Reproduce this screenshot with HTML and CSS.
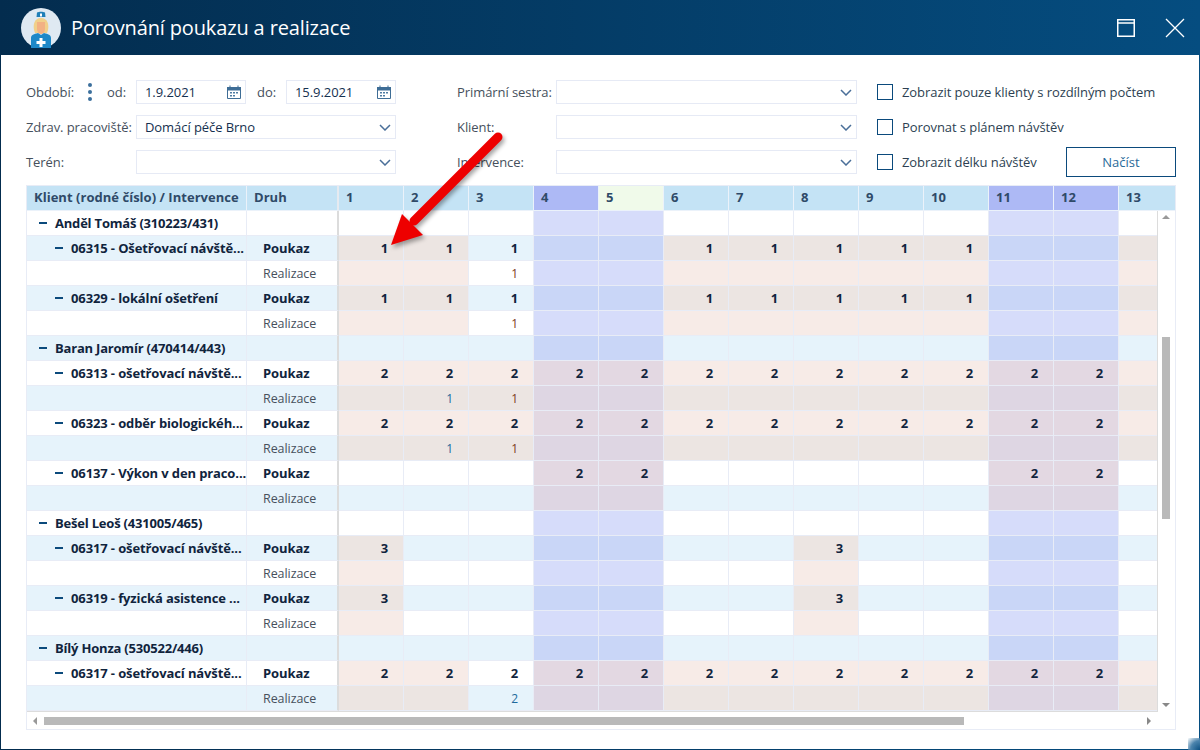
FILE: index.html
```html
<!DOCTYPE html>
<html lang="cs">
<head>
<meta charset="utf-8">
<title>Porovnání poukazu a realizace</title>
<link rel="stylesheet" href="styles.css">
</head>
<body>
<svg width="0" height="0" class="defs">
  <defs>
    <symbol id="chev" viewBox="0 0 12 7"><path d="M1 1l5 5 5-5" fill="none" stroke="#4a6f99" stroke-width="1.5"/></symbol>
    <symbol id="cal" viewBox="0 0 14 14"><path d="M.5 2.5h13v11H.5z" fill="#fff" stroke="#3e6d96"/><path d="M0 2h14v3.5H0z" fill="#3e6d96"/><path d="M3 .5v2M11 .5v2" stroke="#3e6d96"/><path d="M3 7h2v1.500H3zM6 7h2v1.500H6zM9 7h2v1.500H9zM3 10h2v1.500H3zM6 10h2v1.500H6z" fill="#4f7ca3"/></symbol>
  </defs>
</svg>
<div class="window">
  <header class="titlebar">
    <svg class="avatar" viewBox="0 0 40 40" width="40" height="40">
      <circle cx="20" cy="20" r="20" fill="#dfe9f2"/>
      <path d="M13 22c-1-5 0-12 7-12s8 7 7 12l-1 3H14z" fill="#f1d08a"/>
      <path d="M16 14h8v7c0 3-2 5-4 5s-4-2-4-5z" fill="#f2b184"/>
      <path d="M16 4.500c2-1 6-1 8 0l.5 4.500h-9z" fill="#1f7fb8"/>
      <path d="M19 5.500h2v3h-2z" fill="#fff"/>
      <path d="M10 40V30c0-3 3-4 7-5l3 2 3-2c4 1 7 2 7 5v10a20 20 0 0 1-20 0z" fill="#1d88c8"/>
      <path d="M18.500 30h3v3h3v3h-3v3h-3v-3h-3v-3h3z" fill="#fff"/>
    </svg>
    <h1 class="title">Porovnání poukazu a realizace</h1>
    <svg class="win-btn maximize" viewBox="0 0 18 18" width="18" height="18"><path d="M.75.75h16.500v16.500H.75z" fill="none" stroke="#fff" stroke-width="1.500"/><path d="M0 4h18" stroke="#fff" stroke-width="1.500"/></svg>
    <svg class="win-btn close" viewBox="0 0 20 20" width="20" height="20"><path d="M1 1l18 18M19 1L1 19" fill="none" stroke="#fff" stroke-width="1.300"/></svg>
  </header>
  <main class="content">
    <section class="filters">
      <div class="fcol col-a">
        <div class="frow">
          <label class="lbl lbl-period">Období:</label>
          <span class="kebab"><i></i><i></i><i></i></span>
          <label class="lbl lbl-from">od:</label>
          <div class="field date">1.9.2021<svg class="cal" width="14" height="14"><use href="#cal"/></svg></div>
          <label class="lbl lbl-to">do:</label>
          <div class="field date">15.9.2021<svg class="cal" width="14" height="14"><use href="#cal"/></svg></div>
        </div>
        <div class="frow">
          <label class="lbl lbl-a">Zdrav. pracoviště:</label>
          <div class="field grow">Domácí péče Brno<svg class="chev" width="12" height="7"><use href="#chev"/></svg></div>
        </div>
        <div class="frow">
          <label class="lbl lbl-a">Terén:</label>
          <div class="field grow"><svg class="chev" width="12" height="7"><use href="#chev"/></svg></div>
        </div>
      </div>
      <div class="fcol col-b">
        <div class="frow"><label class="lbl lbl-b">Primární sestra:</label><div class="field grow"><svg class="chev" width="12" height="7"><use href="#chev"/></svg></div></div>
        <div class="frow"><label class="lbl lbl-b">Klient:</label><div class="field grow"><svg class="chev" width="12" height="7"><use href="#chev"/></svg></div></div>
        <div class="frow"><label class="lbl lbl-b">Intervence:</label><div class="field grow"><svg class="chev" width="12" height="7"><use href="#chev"/></svg></div></div>
      </div>
      <div class="fcol col-c">
        <div class="frow"><input type="checkbox" class="check"><span class="lbl">Zobrazit pouze klienty s rozdílným počtem</span></div>
        <div class="frow"><input type="checkbox" class="check"><span class="lbl">Porovnat s plánem návštěv</span></div>
        <div class="frow"><input type="checkbox" class="check"><span class="lbl">Zobrazit délku návštěv</span><button class="load">Načíst</button></div>
      </div>
    </section>

    <section class="grid">
      <div class="row head">
        <span>Klient (rodné číslo) / Intervence</span><span class="druh">Druh</span>
        <span>1</span><span>2</span><span>3</span><span class="we">4</span><span class="today">5</span><span>6</span><span>7</span><span>8</span><span>9</span><span>10</span><span class="we">11</span><span class="we">12</span><span>13</span>
      </div>
      <div class="body">
        <div class="rows">
          <div class="row"><span class="name l1"><i class="minus"></i>Anděl Tomáš (310223/431)</span><span class="kind"></span><span class="d"></span><span class="d"></span><span class="d"></span><span class="d e"></span><span class="d e"></span><span class="d"></span><span class="d"></span><span class="d"></span><span class="d"></span><span class="d"></span><span class="d e"></span><span class="d e"></span><span class="d"></span></div>
          <div class="row alt"><span class="name l2"><i class="minus"></i>06315 - Ošetřovací návště...</span><span class="kind strong">Poukaz</span><span class="d f b">1</span><span class="d f b">1</span><span class="d b">1</span><span class="d e"></span><span class="d e"></span><span class="d f b">1</span><span class="d f b">1</span><span class="d f b">1</span><span class="d f b">1</span><span class="d f b">1</span><span class="d e"></span><span class="d e"></span><span class="d f"></span></div>
          <div class="row"><span class="name"></span><span class="kind">Realizace</span><span class="d f"></span><span class="d f"></span><span class="d rz">1</span><span class="d e"></span><span class="d e"></span><span class="d f"></span><span class="d f"></span><span class="d f"></span><span class="d f"></span><span class="d f"></span><span class="d e"></span><span class="d e"></span><span class="d f"></span></div>
          <div class="row alt"><span class="name l2"><i class="minus"></i>06329 - lokální ošetření</span><span class="kind strong">Poukaz</span><span class="d f b">1</span><span class="d f b">1</span><span class="d b">1</span><span class="d e"></span><span class="d e"></span><span class="d f b">1</span><span class="d f b">1</span><span class="d f b">1</span><span class="d f b">1</span><span class="d f b">1</span><span class="d e"></span><span class="d e"></span><span class="d f"></span></div>
          <div class="row"><span class="name"></span><span class="kind">Realizace</span><span class="d f"></span><span class="d f"></span><span class="d rz">1</span><span class="d e"></span><span class="d e"></span><span class="d f"></span><span class="d f"></span><span class="d f"></span><span class="d f"></span><span class="d f"></span><span class="d e"></span><span class="d e"></span><span class="d f"></span></div>

          <div class="row alt"><span class="name l1"><i class="minus"></i>Baran Jaromír (470414/443)</span><span class="kind"></span><span class="d"></span><span class="d"></span><span class="d"></span><span class="d e"></span><span class="d e"></span><span class="d"></span><span class="d"></span><span class="d"></span><span class="d"></span><span class="d"></span><span class="d e"></span><span class="d e"></span><span class="d"></span></div>
          <div class="row"><span class="name l2"><i class="minus"></i>06313 - ošetřovací návště...</span><span class="kind strong">Poukaz</span><span class="d f b">2</span><span class="d f b">2</span><span class="d f b">2</span><span class="d e f b">2</span><span class="d e f b">2</span><span class="d f b">2</span><span class="d f b">2</span><span class="d f b">2</span><span class="d f b">2</span><span class="d f b">2</span><span class="d e f b">2</span><span class="d e f b">2</span><span class="d f"></span></div>
          <div class="row alt"><span class="name"></span><span class="kind">Realizace</span><span class="d f"></span><span class="d f rz blue">1</span><span class="d f rz">1</span><span class="d e f"></span><span class="d e f"></span><span class="d f"></span><span class="d f"></span><span class="d f"></span><span class="d f"></span><span class="d f"></span><span class="d e f"></span><span class="d e f"></span><span class="d f"></span></div>
          <div class="row"><span class="name l2"><i class="minus"></i>06323 - odběr biologickéh...</span><span class="kind strong">Poukaz</span><span class="d f b">2</span><span class="d f b">2</span><span class="d f b">2</span><span class="d e f b">2</span><span class="d e f b">2</span><span class="d f b">2</span><span class="d f b">2</span><span class="d f b">2</span><span class="d f b">2</span><span class="d f b">2</span><span class="d e f b">2</span><span class="d e f b">2</span><span class="d f"></span></div>
          <div class="row alt"><span class="name"></span><span class="kind">Realizace</span><span class="d f"></span><span class="d f rz blue">1</span><span class="d f rz">1</span><span class="d e f"></span><span class="d e f"></span><span class="d f"></span><span class="d f"></span><span class="d f"></span><span class="d f"></span><span class="d f"></span><span class="d e f"></span><span class="d e f"></span><span class="d f"></span></div>
          <div class="row"><span class="name l2"><i class="minus"></i>06137 - Výkon v den praco...</span><span class="kind strong">Poukaz</span><span class="d"></span><span class="d"></span><span class="d"></span><span class="d e f b">2</span><span class="d e f b">2</span><span class="d"></span><span class="d"></span><span class="d"></span><span class="d"></span><span class="d"></span><span class="d e f b">2</span><span class="d e f b">2</span><span class="d"></span></div>
          <div class="row alt"><span class="name"></span><span class="kind">Realizace</span><span class="d"></span><span class="d"></span><span class="d"></span><span class="d e f"></span><span class="d e f"></span><span class="d"></span><span class="d"></span><span class="d"></span><span class="d"></span><span class="d"></span><span class="d e f"></span><span class="d e f"></span><span class="d"></span></div>

          <div class="row"><span class="name l1"><i class="minus"></i>Bešel Leoš (431005/465)</span><span class="kind"></span><span class="d"></span><span class="d"></span><span class="d"></span><span class="d e"></span><span class="d e"></span><span class="d"></span><span class="d"></span><span class="d"></span><span class="d"></span><span class="d"></span><span class="d e"></span><span class="d e"></span><span class="d"></span></div>
          <div class="row alt"><span class="name l2"><i class="minus"></i>06317 - ošetřovací návště...</span><span class="kind strong">Poukaz</span><span class="d f b">3</span><span class="d"></span><span class="d"></span><span class="d e"></span><span class="d e"></span><span class="d"></span><span class="d"></span><span class="d f b">3</span><span class="d"></span><span class="d"></span><span class="d e"></span><span class="d e"></span><span class="d"></span></div>
          <div class="row"><span class="name"></span><span class="kind">Realizace</span><span class="d f"></span><span class="d"></span><span class="d"></span><span class="d e"></span><span class="d e"></span><span class="d"></span><span class="d"></span><span class="d f"></span><span class="d"></span><span class="d"></span><span class="d e"></span><span class="d e"></span><span class="d"></span></div>
          <div class="row alt"><span class="name l2"><i class="minus"></i>06319 - fyzická asistence ...</span><span class="kind strong">Poukaz</span><span class="d f b">3</span><span class="d"></span><span class="d"></span><span class="d e"></span><span class="d e"></span><span class="d"></span><span class="d"></span><span class="d f b">3</span><span class="d"></span><span class="d"></span><span class="d e"></span><span class="d e"></span><span class="d"></span></div>
          <div class="row"><span class="name"></span><span class="kind">Realizace</span><span class="d f"></span><span class="d"></span><span class="d"></span><span class="d e"></span><span class="d e"></span><span class="d"></span><span class="d"></span><span class="d f"></span><span class="d"></span><span class="d"></span><span class="d e"></span><span class="d e"></span><span class="d"></span></div>

          <div class="row alt"><span class="name l1"><i class="minus"></i>Bílý Honza (530522/446)</span><span class="kind"></span><span class="d"></span><span class="d"></span><span class="d"></span><span class="d e"></span><span class="d e"></span><span class="d"></span><span class="d"></span><span class="d"></span><span class="d"></span><span class="d"></span><span class="d e"></span><span class="d e"></span><span class="d"></span></div>
          <div class="row"><span class="name l2"><i class="minus"></i>06317 - ošetřovací návště...</span><span class="kind strong">Poukaz</span><span class="d f b">2</span><span class="d f b">2</span><span class="d b">2</span><span class="d e f b">2</span><span class="d e f b">2</span><span class="d f b">2</span><span class="d f b">2</span><span class="d f b">2</span><span class="d f b">2</span><span class="d f b">2</span><span class="d e f b">2</span><span class="d e f b">2</span><span class="d f"></span></div>
          <div class="row alt"><span class="name"></span><span class="kind">Realizace</span><span class="d f"></span><span class="d f"></span><span class="d rz blue">2</span><span class="d e f"></span><span class="d e f"></span><span class="d f"></span><span class="d f"></span><span class="d f"></span><span class="d f"></span><span class="d f"></span><span class="d e f"></span><span class="d e f"></span><span class="d f"></span></div>
        </div>
        <div class="vscroll"><i class="arrow up"></i><i class="vthumb"></i><i class="arrow down"></i></div>
      </div>
      <div class="hscroll"><i class="arrow left"></i><i class="hthumb"></i><i class="arrow right"></i></div>
    </section>
  </main>
  <svg class="callout" width="130" height="130" viewBox="0 0 130 130">
    <g class="callout-shape">
      <path d="M112 7L28 91" fill="none" stroke="#ee0000" stroke-width="9" stroke-linecap="round"/>
      <path d="M5 115L16 84 37 105z" fill="#ee0000"/>
    </g>
  </svg>
  <i class="grip"></i>
</div>
</body>
</html>
```
FILE: styles.css
```css
* { box-sizing: border-box; }
html, body { margin: 0; padding: 0; }
body { width: 1200px; height: 750px; overflow: hidden; font-family: "Open Sans", "Noto Sans", sans-serif; font-size: 13px; letter-spacing: -.07px; color: #46505c; }
.defs { position: absolute; }

.window { position: relative; width: 1200px; height: 750px; display: flex; flex-direction: column; padding: 0 1px 1px; background: linear-gradient(90deg, #032c4e, #054d80); }
.titlebar { flex: none; height: 55px; display: flex; align-items: center; padding-left: 20px; }
.avatar { flex: none; }
.title { margin: 0 0 0 10px; font-size: 20px; font-weight: 400; letter-spacing: -.14px; color: #fff; flex: 1; }
.win-btn { flex: none; }
.maximize { margin-right: 30px; }
.close { margin-right: 14px; }

.content { flex: 1; background: #fff; padding: 25px 23px 0 25px; }

.filters { display: flex; }
.fcol { display: flex; flex-direction: column; gap: 11px; }
.col-a { width: 370px; }
.col-b { width: 400px; margin-left: 61px; }
.col-c { width: 299px; margin-left: 20px; }
.frow { height: 24px; display: flex; align-items: center; }
.lbl { white-space: nowrap; }
.lbl-period { width: 59px; }
.kebab { width: 19px; display: flex; flex-direction: column; align-items: flex-start; gap: 3px; margin-left: 3px; }
.kebab i { width: 4px; height: 4px; border-radius: 50%; background: #3c6f9c; }
.lbl-from { width: 29px; }
.lbl-to { width: 40px; padding-left: 11px; }
.lbl-a { width: 110px; }
.lbl-b { width: 99px; }
.field { height: 24px; border: 1px solid #e6eaf5; display: flex; align-items: center; padding-left: 8px; color: #15304f; position: relative; }
.date { width: 110px; }
.grow { flex: 1; }
.cal { margin-left: auto; margin-right: 4px; }
.chev { margin-left: auto; margin-right: 4px; }
.check { appearance: none; -webkit-appearance: none; flex: none; margin: 0 9px 0 0; width: 16px; height: 16px; border: 1px solid #0b4a7c; background: #fff; border-radius: 0; }
.col-c .lbl { color: #2d3f52; }
.load { margin: -3px 0 -3px auto; width: 110px; height: 30px; flex: none; background: #fff; border: 1px solid #0b4a7c; border-radius: 0; color: #2a6a99; font: 13px "Open Sans", sans-serif; padding: 0; }

.grid { margin-top: 11px; border: 1px solid #e8ecf6; height: 545px; display: flex; flex-direction: column; overflow: hidden; }
.row { display: grid; grid-template-columns: 220px 92px repeat(13, 65px); height: 25px; background: #fff; }
.row > span { display: flex; align-items: center; border-right: 1px solid #e8ecf6; border-bottom: 1px solid #e8ecf6; overflow: hidden; white-space: nowrap; min-width: 0; }
.head { flex: none; background: #c4e3f5; font-weight: 700; letter-spacing: .03px; color: #2f4a68; }
.head > span { padding: 0 0 2px 7px; border-color: #ebf2fa; background: #c4e3f5; }
.head .druh { border-right-width: 2px; border-right-color: #e6eaf0; }
.head .we { background: #adb9f5; }
.head .today { background: #f0faea; }

.body { flex: none; display: flex; height: 501px; }
.rows { width: 1131px; overflow: hidden; border-bottom: 1px solid #dcdcdc; background: #f4f6fb; }
.alt { background: #e6f3fb; }
.alt > span { background: #e6f3fb; }
.name { font-weight: 700; color: #10243d; }
.l1 { padding-left: 12px; letter-spacing: -.2px; }
.l2 { padding-left: 28px; letter-spacing: -.12px; }
.minus { flex: none; width: 8px; height: 2px; background: #0b4a7c; margin-right: 8px; }
.row > .kind { border-right: 2px solid #dcdcdc; padding-left: 16px; color: #46505c; font-size: 12.500px; }
.row > .strong { font-weight: 700; color: #10243d; font-size: 13px; }
.d { justify-content: flex-end; padding-right: 15px; font-size: 12px; }
.b { font-weight: 700; color: #10243d; font-size: 13px; }
.rz { color: #7d4020; }
.blue { color: #1e6a9c; }
.row > .e { background: #d6dcfa; }
.row.alt > .e { background: #c9d6f7; }
.row > .f { background: #f7ebe7; }
.row.alt > .f { background: #ece5e2; }
.row > .e.f { background: #e3d8e2; }
.row.alt > .e.f { background: #ded6e3; }

.vscroll { position: relative; width: 18px; background: #fff; border-left: 1px solid #dcdcdc; }
.vthumb { position: absolute; left: 4px; top: 126px; width: 8px; height: 182px; background: #b9b9b9; }
.arrow { position: absolute; width: 0; height: 0; border: 4px solid transparent; }
.up { left: 4px; top: 4px; border-top-width: 0; border-bottom-color: #999; }
.down { left: 4px; bottom: 5px; border-bottom-width: 0; border-top-color: #888; }
.hscroll { position: relative; flex: 1; background: #fff; }
.hthumb { position: absolute; left: 17px; top: 5px; width: 920px; height: 8px; background: #b9b9b9; }
.left { left: 6px; top: 5px; border-left-width: 0; border-right-color: #999; }
.right { left: 1120px; top: 5px; border-right-width: 0; border-left-color: #888; }

.callout { position: absolute; left: 386px; top: 130px; pointer-events: none; }
.callout-shape { filter: drop-shadow(2px 3px 2px rgba(0,0,0,.35)); }
.grip { position: absolute; right: 0; bottom: 0; width: 12px; height: 12px; background: radial-gradient(circle at 100% 100%, #0a4f82 0, #4c84ad 55%, rgba(255,255,255,0) 100%); }
```
